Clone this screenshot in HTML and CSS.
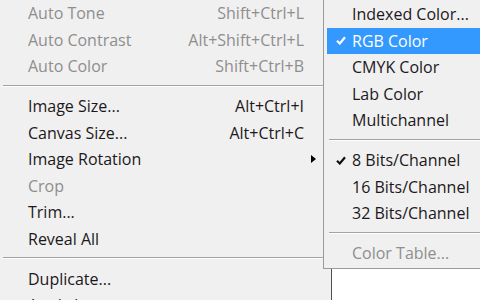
FILE: index.html
```html
<!DOCTYPE html>
<html>
<head>
<meta charset="utf-8">
<link rel="stylesheet" href="styles.css">
</head>
<body>
<div class="screen">
  <div class="menu main">
    <div class="item disabled"><span class="label">Auto Tone</span><span class="key">Shift+Ctrl+L</span><span class="tail"></span></div>
    <div class="item disabled"><span class="label">Auto Contrast</span><span class="key">Alt+Shift+Ctrl+L</span><span class="tail"></span></div>
    <div class="item disabled"><span class="label">Auto Color</span><span class="key">Shift+Ctrl+B</span><span class="tail"></span></div>
    <div class="sep"></div>
    <div class="item"><span class="label">Image Size...</span><span class="key">Alt+Ctrl+I</span><span class="tail"></span></div>
    <div class="item"><span class="label">Canvas Size...</span><span class="key">Alt+Ctrl+C</span><span class="tail"></span></div>
    <div class="item"><span class="label">Image Rotation</span><span class="key"></span><span class="tail"><span class="arrow"></span></span></div>
    <div class="item disabled"><span class="label">Crop</span><span class="key"></span><span class="tail"></span></div>
    <div class="item"><span class="label">Trim...</span><span class="key"></span><span class="tail"></span></div>
    <div class="item"><span class="label">Reveal All</span><span class="key"></span><span class="tail"></span></div>
    <div class="sep"></div>
    <div class="item"><span class="label">Duplicate...</span><span class="key"></span><span class="tail"></span></div>
    <div class="item"><span class="label">Apply Image...</span><span class="key"></span><span class="tail"></span></div>
  </div>

  <div class="menu sub">
    <div class="item"><span class="check"></span><span class="label">Indexed Color...</span></div>
    <div class="item active"><span class="check"><svg width="10" height="9" viewBox="0 0 10 9"><path d="M1 4.8 L3.8 7.5 L9 1.2" fill="none" stroke="#fff" stroke-width="2.2"/></svg></span><span class="label">RGB Color</span></div>
    <div class="item"><span class="check"></span><span class="label">CMYK Color</span></div>
    <div class="item"><span class="check"></span><span class="label">Lab Color</span></div>
    <div class="item"><span class="check"></span><span class="label">Multichannel</span></div>
    <div class="sep"></div>
    <div class="item"><span class="check"><svg width="10" height="9" viewBox="0 0 10 9"><path d="M1 4.8 L3.8 7.5 L9 1.2" fill="none" stroke="#111" stroke-width="2.2"/></svg></span><span class="label">8 Bits/Channel</span></div>
    <div class="item"><span class="check"></span><span class="label">16 Bits/Channel</span></div>
    <div class="item"><span class="check"></span><span class="label">32 Bits/Channel</span></div>
    <div class="sep"></div>
    <div class="item disabled"><span class="check"></span><span class="label">Color Table...</span></div>
  </div>
</div>
</body>
</html>
```

FILE: styles.css
```css
html, body {
  margin: 0;
  padding: 0;
  background: #fff;
}

.screen {
  position: relative;
  width: 480px;
  height: 300px;
  overflow: hidden;
  background: #fff;
  font-family: "Open Sans", "Noto Sans", sans-serif;
  font-size: 16px;
  color: #1c1820;
}

.menu {
  background: #f0f0f0;
}

.main {
  width: 331px;
  border-right: 1px solid #505050;
  padding-top: 0;
  height: 330px;
}

.item {
  display: flex;
  align-items: center;
  height: 26.5px;
  line-height: 26.5px;
  white-space: nowrap;
}

.main .item {
  padding-left: 28px;
}

.label {
  flex: 1;
}

.key {
  text-align: right;
}

.tail {
  width: 27px;
  display: flex;
  align-items: center;
  padding-left: 7px;
  box-sizing: border-box;
}

.arrow {
  width: 0;
  height: 0;
  border-left: 5px solid #000;
  border-top: 4px solid transparent;
  border-bottom: 4px solid transparent;
}

.disabled {
  color: #8e8e8e;
}

.sep {
  height: 13.5px;
  box-sizing: border-box;
  padding-top: 5px;
}

.sep::before {
  content: "";
  display: block;
  border-top: 1px solid #a3a3a3;
  border-bottom: 1px solid #ffffff;
}

.main .sep {
  margin-left: 3px;
}

.sub {
  position: absolute;
  left: 323px;
  top: -3px;
  width: 200px;
  border: 1px solid #9a9a9a;
  padding: 3px 0 1px 3px;
}

.sub .sep {
  margin-left: 2px;
}

.check {
  width: 25px;
  flex: none;
  display: flex;
  align-items: center;
  padding-left: 9px;
  box-sizing: border-box;
}

.sub .active {
  background: #3399ff;
  color: #fff;
}
```
